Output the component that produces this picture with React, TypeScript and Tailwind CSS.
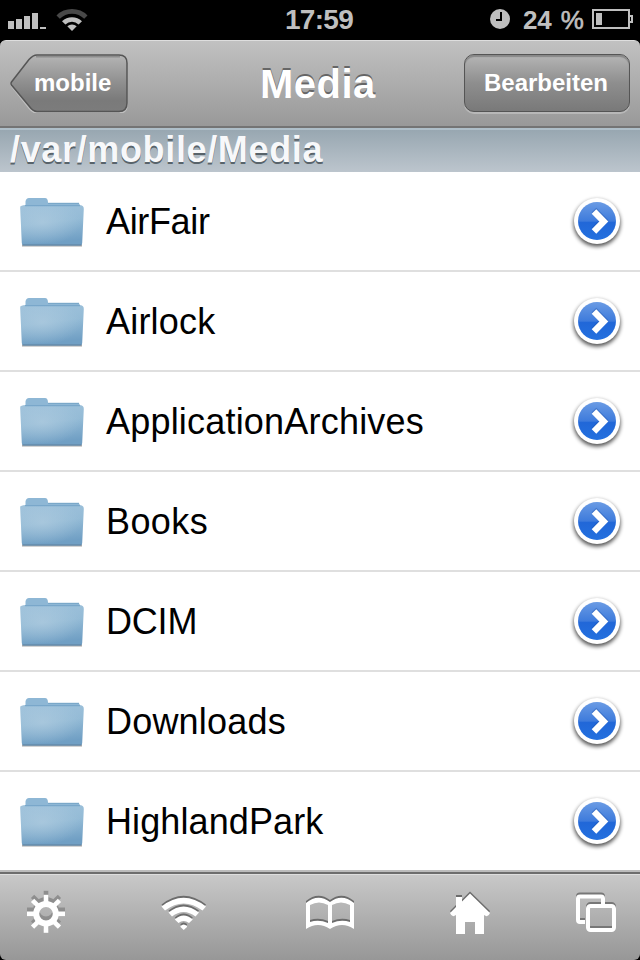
import type { ReactNode } from "react";

const folders = [
  { name: "AirFair", tracking: "tracking-[-0.35px]" },
  { name: "Airlock", tracking: "tracking-[0.2px]" },
  { name: "ApplicationArchives", tracking: "tracking-[0.2px]" },
  { name: "Books", tracking: "tracking-[0.4px]" },
  { name: "DCIM", tracking: "tracking-[-0.2px]" },
  { name: "Downloads", tracking: "tracking-[0.2px]" },
  { name: "HighlandPark", tracking: "tracking-[0.1px]" },
];

const teeth = [0, 45, 90, 135, 180, 225, 270, 315];

function StatusBar() {
  return (
    <div className="relative flex h-10 items-center justify-between bg-black text-[#bfbfbf]">
      <svg className="ml-2 h-10 w-20" viewBox="8 0 80 40" fill="#bfbfbf">
        <path d="M8 21h6v8H8zM16 19h6v10h-6zM24 16h6v13h-6zM32 13h6v16h-6zM40 27h6v2h-6z" />
        <path d="M56.5 15.5A21.5 21.5 0 0 1 87.5 15.5L84.2 18.8A17 17 0 0 0 59.8 18.8Z" fill="#484848" />
        <path d="M62 21.2A14.5 14.5 0 0 1 82 21.2L78.6 24.4A9.6 9.6 0 0 0 65.4 24.4Z" />
        <path d="M67.3 26.2A7 7 0 0 1 76.7 26.2L72 31Z" />
      </svg>
      <span className="absolute top-0 left-[285px] text-[28px] leading-[39px] font-bold tracking-[-0.7px]">
        17:59
      </span>
      <div className="flex items-center">
        <svg className="h-10 w-5" viewBox="0 0 20 40">
          <circle cx="10" cy="19" r="10" fill="#bfbfbf" />
          <path d="M11 12v8H6" fill="none" stroke="#000" strokeWidth="2" />
        </svg>
        <span className="ml-[13px] w-[62px] text-[26px] leading-10 font-bold tracking-[-0.1px] whitespace-nowrap">
          24 <span className="ml-[2px] font-normal [-webkit-text-stroke:0.6px_#bfbfbf]">%</span>
        </span>
        <svg className="mr-[6px] ml-[7px] h-10 w-[42px]" viewBox="0 0 42 40">
          <path d="M1 10h36v18H1zM37 16h3v6h-3" fill="none" stroke="#bfbfbf" strokeWidth="2" />
          <path d="M4 13h6v12H4z" fill="#bfbfbf" />
        </svg>
      </div>
    </div>
  );
}

function NavBar() {
  return (
    <div className="bg-black">
      <div className="relative flex h-[88px] items-start justify-between rounded-t-[6px] border-t border-b-2 border-t-[#dedede] border-b-[#747474] bg-linear-to-b from-[#c1c1c1] to-[#999999] pt-[13px] pr-[10px] pl-[10px] text-white [text-shadow:0_-2px_0_#666]">
        <button className="relative h-[59px] w-[118px] text-left">
          <svg className="absolute inset-0" width="118" height="59" viewBox="0 0 118 59">
            <defs>
              <linearGradient id="back" x1="0" y1="0" x2="0" y2="1">
                <stop offset="0" stopColor="#b5b5b5" />
                <stop offset="0.5" stopColor="#8e8e8e" />
                <stop offset="0.8" stopColor="#7a7a7a" />
                <stop offset="1" stopColor="#7c7c7c" />
              </linearGradient>
            </defs>
            <path
              d="M27 3.5H109Q117 3.5 117 11.5V51Q117 59 109 59H27Q23 59 19 54L1.5 32Q.5 30.5 1.5 29L19 7Q23 3.5 27 3.5Z"
              fill="none"
              stroke="#c0c0c0"
              strokeWidth="1.5"
            />
            <path
              d="M27 1H109Q117 1 117 9V49Q117 57.5 109 57.5H27Q23 57.5 19 52L1.5 31Q.5 29.5 1.5 28L19 5.5Q23 1 27 1Z"
              fill="url(#back)"
              stroke="#555"
              strokeWidth="1.5"
            />
            <path d="M26 2.8H110" stroke="#686868" strokeWidth="1.5" opacity=".5" />
          </svg>
          <span className="relative block pl-6 text-2xl leading-[58px] font-bold">
            <span className="relative -top-px">mobile</span>
          </span>
        </button>
        <h1 className="absolute top-5 left-[260px] text-[40px] leading-[46px] font-bold tracking-[0.5px]">
          Media
        </h1>
        <button className="h-[58px] w-[166px] rounded-[10px] border-[1.5px] border-[#555] bg-linear-to-b from-[#b5b5b5] via-[#8e8e8e] to-[#797979] text-2xl leading-[56px] font-bold shadow-[0_2px_0_#b8b8b8,inset_0_2px_1px_#888]">
          <span className="relative -left-px">Bearbeiten</span>
        </button>
      </div>
    </div>
  );
}

function FolderIcon() {
  return (
    <svg className="h-[50px] w-16 shrink-0" viewBox="0 0 64 50">
      <defs>
        <linearGradient id="folder" x1="0" y1="0" x2="0.2" y2="1">
          <stop offset="0" stopColor="#9fc2db" />
          <stop offset="0.5" stopColor="#94bbd6" />
          <stop offset="1" stopColor="#709fc4" />
        </linearGradient>
        <radialGradient id="folderShine" cx="0.35" cy="0.45" r="0.6">
          <stop offset="0" stopColor="#bad2e3" stopOpacity=".5" />
          <stop offset="1" stopColor="#bad2e3" stopOpacity="0" />
        </radialGradient>
      </defs>
      <path d="M2 47h60v2.6H2z" fill="#777" opacity=".65" />
      <path d="M5.5 9V4.5Q6 1 9 1H25Q28 1 28 6H58Q60 6 60 10H5Z" fill="#8eb7d5" />
      <path d="M28 6.3H59" stroke="#76a4c6" />
      <path d="M1 9Q3 8 6 8H59Q64 8 63.8 12L62.2 46Q62.2 48.5 60 48.5H4Q1.8 48.5 1.8 46L0.2 11Q0 9 1 9Z" fill="url(#folder)" />
      <path d="M1 9Q3 8 6 8H59Q64 8 63.8 12L62.2 46H1.8L0.2 11Z" fill="url(#folderShine)" />
      <path d="M5 8.7H60" stroke="#79a7ca" strokeWidth="1.2" />
      <path d="M3 47.9H61" stroke="#6186a3" />
    </svg>
  );
}

function DisclosureIcon() {
  return (
    <svg className="h-[60px] w-[60px] shrink-0" viewBox="0 0 60 60">
      <defs>
        <linearGradient id="blue" x1="0" y1="0" x2="0" y2="1">
          <stop offset="0" stopColor="#6a9be4" />
          <stop offset="0.5" stopColor="#3e7bdc" />
          <stop offset="0.54" stopColor="#2167d8" />
          <stop offset="1" stopColor="#2470df" />
        </linearGradient>
        <filter id="soft" x="-20%" y="-20%" width="140%" height="140%">
          <feGaussianBlur stdDeviation="1.9" />
        </filter>
      </defs>
      <circle cx="30" cy="31.3" r="23.3" fill="#000" opacity=".7" filter="url(#soft)" />
      <circle cx="30" cy="29" r="23" fill="#fff" />
      <circle cx="30" cy="29" r="19" fill="url(#blue)" />
      <path d="M27 19.5L36.8 29.5L27 39.5" fill="none" stroke="#1b4faa" strokeOpacity=".4" strokeWidth="6.4" transform="translate(0 -1.5)" />
      <path d="M27 19.5L36.8 29.5L27 39.5" fill="none" stroke="#fff" strokeWidth="6.4" />
    </svg>
  );
}

function ToolbarButton({ className, children }: { className: string; children: ReactNode }) {
  return (
    <button className={className}>
      <svg className="h-[50px] w-[50px]" viewBox="0 0 50 50" fill="#fff">
        {children}
      </svg>
    </button>
  );
}

function Toolbar() {
  return (
    <div className="bg-black">
      <div className="flex h-[90px] items-start rounded-b-[6px] border-t-2 border-[#bcbcbc] bg-linear-to-b from-[#cacaca] to-[#979797] shadow-[inset_0_2px_0_#6d6d6d,inset_0_3px_0_#dedede]">
        {/* settings */}
        <ToolbarButton className="mt-4 ml-[21px] [filter:drop-shadow(0_-4px_0_#8e8e8e)]">
          <circle cx="25" cy="25.8" r="9.8" fill="none" stroke="#fff" strokeWidth="6" />
          {teeth.map((angle) => (
            <path key={angle} d="M22.7 6.8h4.6v9h-4.6z" transform={`rotate(${angle} 25 25.8)`} />
          ))}
        </ToolbarButton>
        {/* network */}
        <ToolbarButton className="mt-4 ml-[88px] [filter:drop-shadow(0_-2px_0_#6c6c6c)]">
          <path d="M2.5 18.5Q24.5 1 47 18.5L43.5 22.5Q24.5 8.5 6 22.5Z" />
          <path d="M9.5 24.5Q24.5 12.5 40 24.5L36.5 28.5Q24.5 19.5 13 28.5Z" />
          <path d="M15.8 31.5Q24.5 23.5 33.8 31.5L30 35Q24.5 31 19.5 35Z" />
          <path d="M21.5 38Q24.5 35 28 38V39L24.7 42L21.5 39Z" />
        </ToolbarButton>
        {/* bookmarks */}
        <ToolbarButton className="mt-4 ml-[96px] [filter:drop-shadow(0_-2px_0_#6c6c6c)]">
          <path
            fillRule="evenodd"
            d="M1 15Q13 5 25 14Q37 5 49 15V41Q37 33 25 41Q13 33 1 41ZM5 17V34Q14 31 23 35V17Q14 12 5 17ZM27 17V35Q36 31 45 34V17Q36 12 27 17Z"
          />
        </ToolbarButton>
        {/* home */}
        <ToolbarButton className="mt-4 ml-[90px] [filter:drop-shadow(0_-1.5px_0_#6c6c6c)]">
          <path d="M25 5.5L45 25Q43 30 39 27V46H30V34H20V46H11V27Q7 30 5 25L11 19V9H17V13.5Z" />
        </ToolbarButton>
        {/* windows */}
        <ToolbarButton className="mt-4 ml-[76px] [filter:drop-shadow(0_-2px_0_#777)]">
          <path
            d="M14 34H9Q7 34 7 32V10.5Q7 8.5 9 8.5H30Q32 8.5 32 10.5V16"
            fill="none"
            stroke="#fff"
            strokeWidth="4"
          />
          <rect x="17" y="18" width="26" height="24" rx="2.5" fill="none" stroke="#fff" strokeWidth="4" />
        </ToolbarButton>
      </div>
    </div>
  );
}

export default function App() {
  return (
    <div className="flex h-[960px] w-[640px] flex-col overflow-hidden bg-white font-['Liberation_Sans',Arial,sans-serif]">
      <StatusBar />
      <NavBar />
      <div className="h-11 border-t-2 border-[#afbfc9] bg-linear-to-b from-[#98a7b1] to-[#bcc5cd] pl-[10px] text-4xl leading-[40px] font-bold tracking-[0.65px] text-[#f7f8fa] [text-shadow:0_2px_0_#58636a]">
        /var/mobile/Media
      </div>
      <ul className="h-[698px] shrink-0 overflow-hidden">
        {folders.map(({ name, tracking }) => (
          <li key={name} className="flex h-[100px] items-center border-b-2 border-[#dfdfdf] pt-[2px] pr-[13px] pl-5">
            <FolderIcon />
            <span className={`ml-[22px] flex-1 text-4xl leading-[42px] text-black ${tracking}`}>{name}</span>
            <DisclosureIcon />
          </li>
        ))}
      </ul>
      <Toolbar />
    </div>
  );
}
